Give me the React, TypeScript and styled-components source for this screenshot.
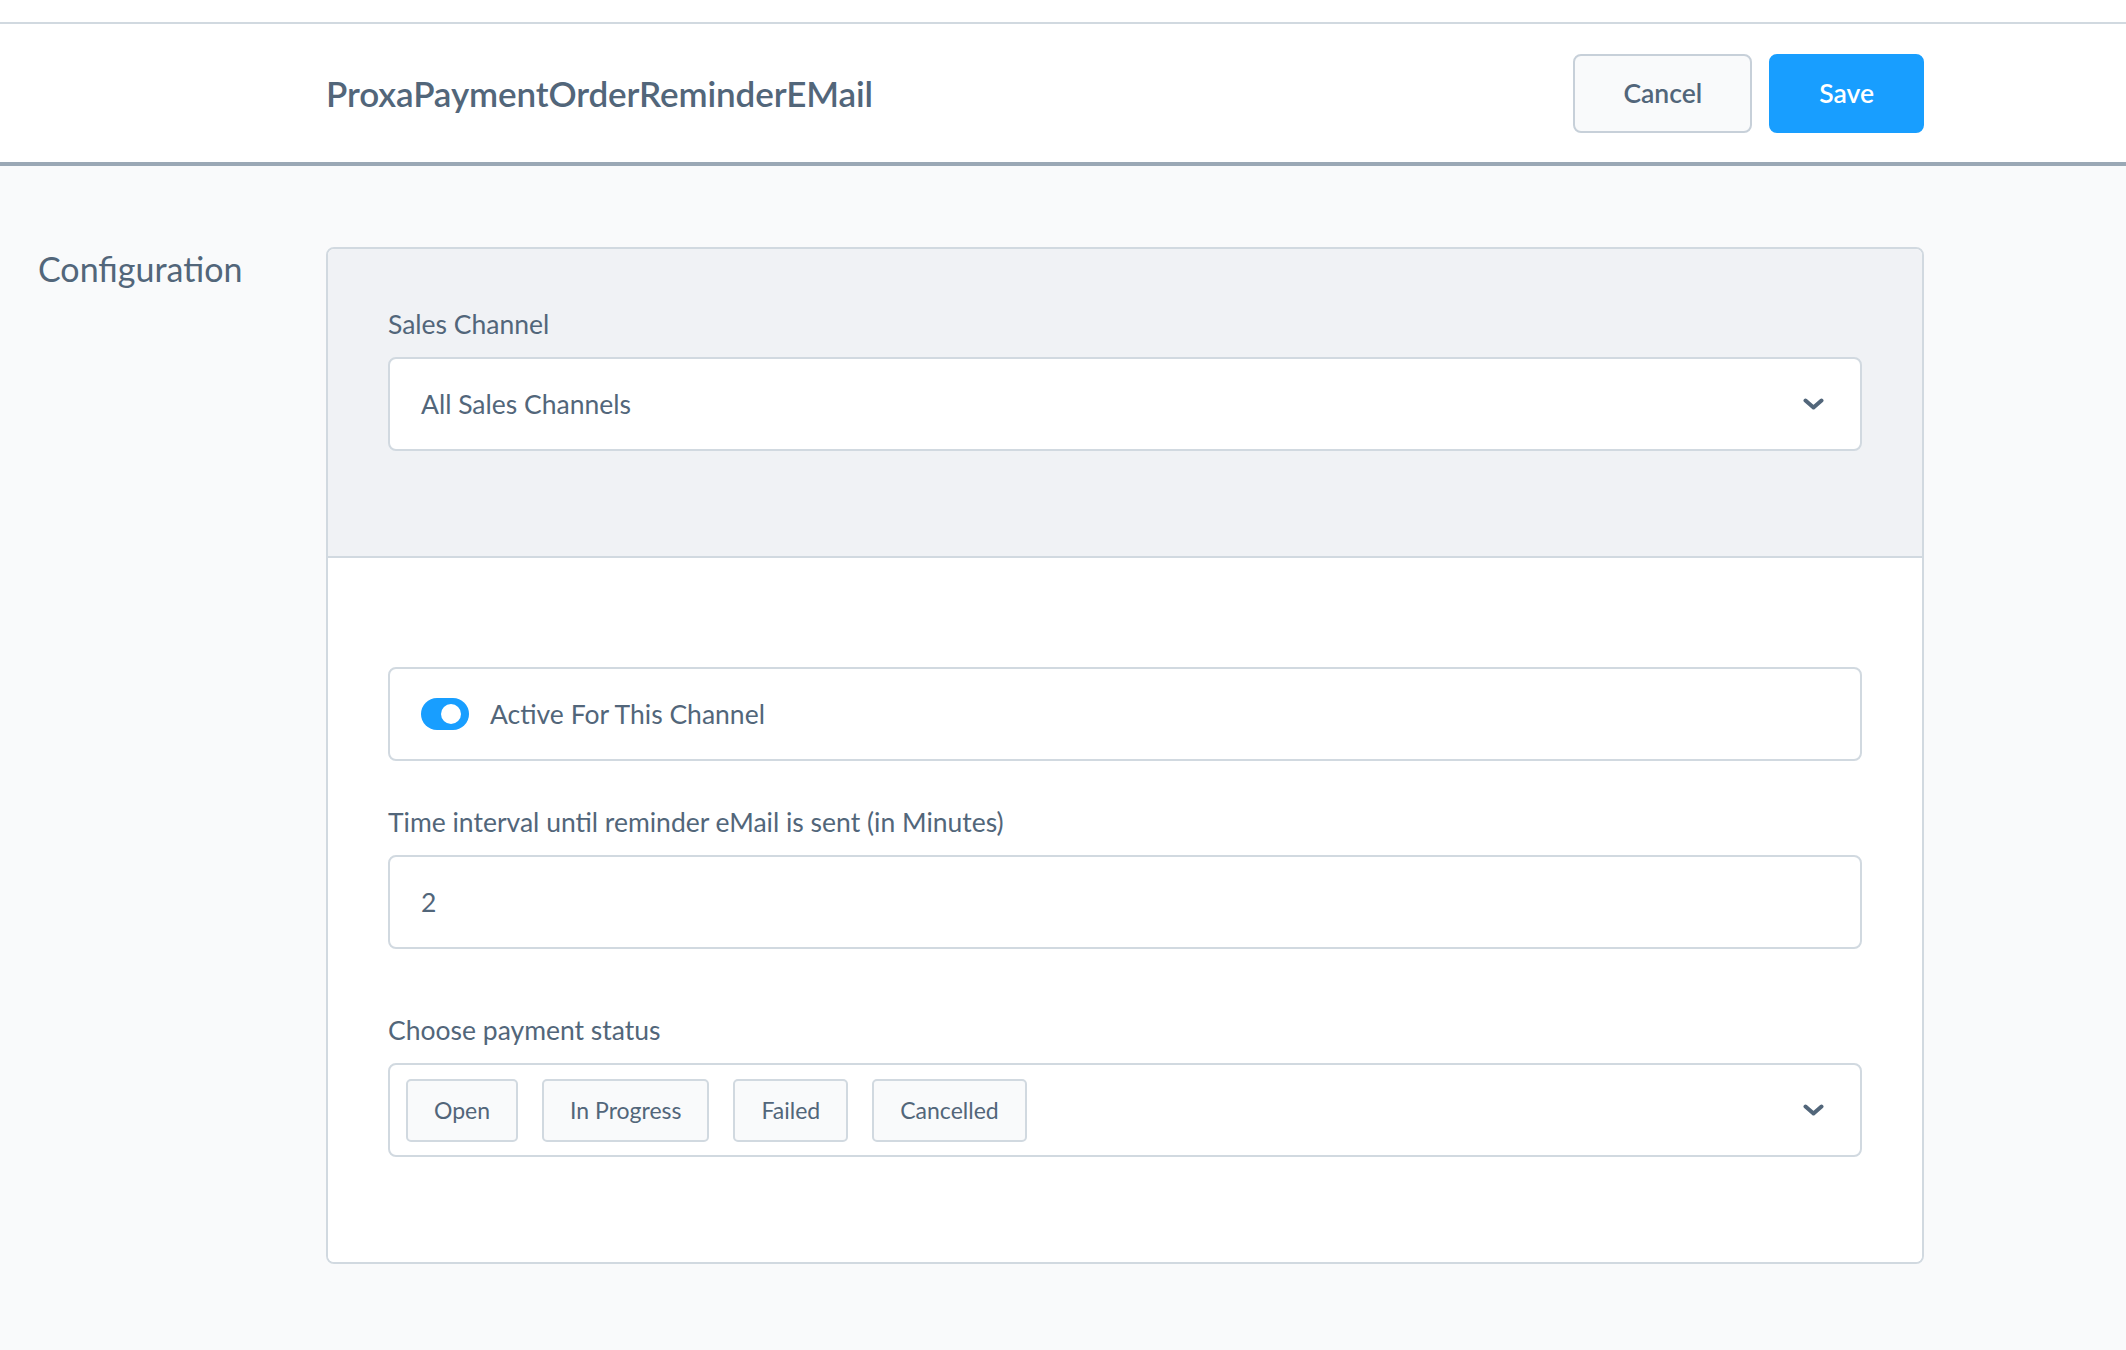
import styled, { createGlobalStyle } from 'styled-components'

const GlobalStyle = createGlobalStyle`
  html, body {
    margin: 0;
    padding: 0;
    background: #f9fafb;
  }

  body {
    font-family: Lato, "Open Sans", sans-serif;
    color: #52667a;
  }
`

const statuses = ['Open', 'In Progress', 'Failed', 'Cancelled']

function Chevron() {
  return (
    <ChevronIcon width="21" height="12" viewBox="0 0 21 12">
      <polyline
        points="2.5,2.5 10.5,9.5 18.5,2.5"
        fill="none"
        stroke="#52667a"
        strokeWidth="4"
        strokeLinecap="round"
        strokeLinejoin="round"
      />
    </ChevronIcon>
  )
}

export default function App() {
  return (
    <Page>
      <GlobalStyle />
      <TopStrip />

      <SmartBar>
        <Title>ProxaPaymentOrderReminderEMail</Title>

        <Actions>
          <Button>Cancel</Button>
          <Button $primary>Save</Button>
        </Actions>
      </SmartBar>

      <Main>
        <SideTitle>Configuration</SideTitle>

        <Card>
          <CardSection $muted>
            <Label>Sales Channel</Label>
            <Field>
              <FieldValue>All Sales Channels</FieldValue>
              <Chevron />
            </Field>
          </CardSection>

          <CardSection $top={109}>
            <Field $gap={46}>
              <Switch>
                <Knob />
              </Switch>
              <SwitchLabel>Active For This Channel</SwitchLabel>
            </Field>

            <Label>Time interval until reminder eMail is sent (in Minutes)</Label>
            <Field $gap={66}>
              <FieldValue>2</FieldValue>
            </Field>

            <Label>Choose payment status</Label>
            <Field $tight>
              <ChipList>
                {statuses.map(status => (
                  <Chip key={'status_' + status}>{status}</Chip>
                ))}
              </ChipList>
              <Chevron />
            </Field>
          </CardSection>
        </Card>
      </Main>
    </Page>
  )
}

const Page = styled.div`
  min-height: 1350px;
  background: #f9fafb;
`

const TopStrip = styled.div`
  height: 22px;
  background: #fff;
`

const SmartBar = styled.header`
  display: flex;
  align-items: center;
  justify-content: space-between;
  height: 138px;
  padding: 0 202px 0 326px;
  background: #fff;
  border-top: 2px solid #d1d9e0;
  border-bottom: 4px solid #9aa8b5;
`

const Title = styled.h1`
  margin: 0;
  font-size: 35px;
  font-weight: 600;
  color: #52667a;
  letter-spacing: -0.1px;
`

const Actions = styled.div`
  display: flex;
  gap: 17px;
`

const Button = styled.button<{ $primary?: boolean }>`
  height: 79px;
  padding: 0 48px;
  border-radius: 8px;
  font-family: Lato, sans-serif;
  font-size: 26.5px;
  font-weight: 600;
  cursor: pointer;
  border: 2px solid ${p => (p.$primary ? '#189eff' : '#c7d0d9')};
  background: ${p => (p.$primary ? '#189eff' : '#f9fafb')};
  color: ${p => (p.$primary ? '#fff' : '#52667a')};
`

const Main = styled.main`
  display: grid;
  grid-template-columns: 288px 1fr;
  padding: 81px 202px 80px 38px;
`

const SideTitle = styled.h2`
  margin: 1px 0 0;
  font-size: 34px;
  font-weight: 400;
  color: #52667a;
`

const Card = styled.section`
  background: #fff;
  border: 2px solid #d1d9e0;
  border-radius: 8px;
  overflow: hidden;
`

const CardSection = styled.div<{ $muted?: boolean; $top?: number }>`
  padding: ${p => p.$top ?? 60}px 60px 105px;
  background: ${p => (p.$muted ? '#f0f2f5' : '#fff')};
  border-bottom: ${p => (p.$muted ? '2px solid #d1d9e0' : 'none')};
`

const Label = styled.label`
  display: block;
  margin-bottom: 17px;
  font-size: 26.5px;
  line-height: 31px;
  color: #52667a;
`

const Field = styled.div<{ $gap?: number; $tight?: boolean }>`
  display: flex;
  align-items: center;
  height: 94px;
  box-sizing: border-box;
  padding: ${p => (p.$tight ? '0 36px 0 16px' : '0 36px 0 31px')};
  margin-bottom: ${p => p.$gap ?? 0}px;
  background: #fff;
  border: 2px solid #d1d9e0;
  border-radius: 8px;
`

const FieldValue = styled.span`
  flex: 1;
  font-size: 26.5px;
  color: #52667a;
`

const ChevronIcon = styled.svg`
  flex-shrink: 0;
  margin-left: auto;
`

const Switch = styled.span`
  position: relative;
  display: inline-block;
  width: 48px;
  height: 32px;
  border-radius: 16px;
  background: #189eff;
  flex-shrink: 0;
`

const Knob = styled.span`
  position: absolute;
  top: 6px;
  right: 8px;
  width: 20px;
  height: 20px;
  border-radius: 50%;
  background: #fff;
`

const SwitchLabel = styled.span`
  margin-left: 21px;
  font-size: 26.5px;
  color: #52667a;
`

const ChipList = styled.div`
  display: flex;
  gap: 24px;
  flex: 1;
`

const Chip = styled.span`
  display: inline-flex;
  align-items: center;
  height: 63px;
  box-sizing: border-box;
  padding: 0 26px;
  background: #f9fafb;
  border: 2px solid #d1d9e0;
  border-radius: 5px;
  font-size: 23px;
  color: #52667a;
`
